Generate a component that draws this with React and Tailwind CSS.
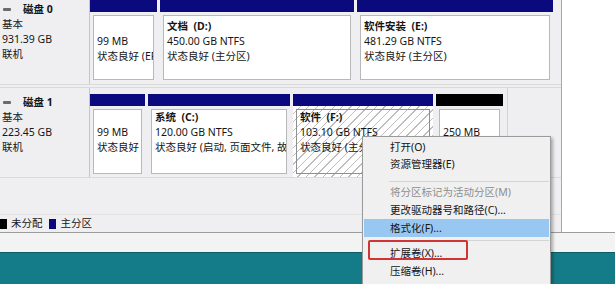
import React from "react";

const hatch =
  "bg-[image:repeating-linear-gradient(135deg,#ffffff_0px,#ffffff_5px,#bdbdbd_5px,#bdbdbd_6px)]";

function Part({ w, head = "bg-[#0a0a7e]", lines, hatched, pt = "pt-0" }) {
  return (
    <div className={`flex flex-col ${w}`}>
      <div className={`h-[12px] ${head}`} />
      <div className={`flex-1 p-[3px] ${hatched ? hatch : ""}`}>
        <div
          className={`h-[65px] overflow-hidden whitespace-pre border px-[3px] ${pt} ${
            hatched ? "border-[#8f8f8f]" : "border-[#b8b8b8] bg-white"
          }`}
        >
          {lines.map((l, i) => (
            <div key={i} className={i === 0 && l.bold ? "font-bold" : ""}>
              {l.text || "\u00a0"}
            </div>
          ))}
        </div>
      </div>
    </div>
  );
}

function DiskLabel({ name, size, pt }) {
  return (
    <div className={`w-[90px] shrink-0 border-r border-[#c6c6c6] pl-[2px] ${pt}`}>
      <div className="flex items-center">
        <span className="mr-[12px] ml-[1px] inline-block h-[3px] w-[8px] rounded-[1px] bg-[#6a6a6a]" />
        <span className="font-bold">{name}</span>
      </div>
      <div>基本</div>
      <div>{size}</div>
      <div>联机</div>
    </div>
  );
}

function MenuItem({ children, disabled, active }) {
  return (
    <div
      className={`h-[18px] pl-[26px] leading-[18px] ${disabled ? "text-[#8e8e8e]" : ""} ${
        active ? "bg-[#98c8f1]" : ""
      }`}
    >
      {children}
    </div>
  );
}

export default function App() {
  return (
    <div className="relative h-[284px] w-[615px] overflow-hidden bg-[#f0f0f0] font-['Noto_Sans','Noto_Sans_CJK_SC',sans-serif] text-[10.5px] leading-[15px] text-[#151515]">
      <div className="flex h-[232px]">
        <div className="flex w-[562px] flex-col border-r border-[#a9a9a9] bg-[#efeff1]">
          {/* disk 0 */}
          <div className="flex h-[85px] border-b border-[#dadada]">
            <DiskLabel name="磁盘 0" size="931.39 GB" pt="pt-[2px]" />
            <div className="flex gap-[3px]">
              <Part
                w="w-[67px]"
                pt="pt-[3px]"
                lines={[{}, { text: "99 MB" }, { text: "状态良好 (EFI 系统分区)" }]}
              />
              <Part
                w="w-[194px]"
                pt="pt-[3px]"
                lines={[
                  { text: "文档  (D:)", bold: true },
                  { text: "450.00 GB NTFS" },
                  { text: "状态良好 (主分区)" },
                ]}
              />
              <Part
                w="w-[196px]"
                pt="pt-[3px]"
                lines={[
                  { text: "软件安装  (E:)", bold: true },
                  { text: "481.29 GB NTFS" },
                  { text: "状态良好 (主分区)" },
                ]}
              />
            </div>
          </div>

          {/* disk 1 */}
          <div className="mt-[2px] flex h-[91px] border-t border-b border-[#dadada]">
            <DiskLabel name="磁盘 1" size="223.45 GB" pt="pt-[7px]" />
            <div className="flex gap-[3px] border-r border-[#d4d4d4] pt-[6px] pr-[4px]">
              <Part w="w-[55px]" lines={[{}, { text: "99 MB" }, { text: "状态良好" }]} />
              <Part
                w="w-[142px]"
                lines={[
                  { text: "系统  (C:)", bold: true },
                  { text: "120.00 GB NTFS" },
                  { text: "状态良好 (启动, 页面文件, 故障转储, 主分区)" },
                ]}
              />
              <Part
                w="w-[140px]"
                hatched
                lines={[
                  { text: "软件  (F:)", bold: true },
                  { text: "103.10 GB NTFS" },
                  { text: "状态良好 (主分区)" },
                ]}
              />
              <Part
                w="w-[67px]"
                head="bg-black"
                lines={[{}, { text: "250 MB" }, { text: "未分配" }]}
              />
            </div>
          </div>

          <div className="flex-1" />

          {/* legend */}
          <div className="flex h-[18px] items-center border-t border-[#e2e2e2]">
            <span className="inline-block h-[10px] w-[7px] bg-black" />
            <span className="ml-[4px]">未分配</span>
            <span className="ml-[6px] inline-block h-[10px] w-[7px] bg-[#0a0a7e]" />
            <span className="ml-[5px]">主分区</span>
          </div>
        </div>
        <div className="flex-1 bg-white" />
      </div>

      <div className="h-[20px] border-t border-[#9c9c9c] bg-[#f3f3f3]" />
      <div className="h-[32px] border-t border-[#0b5c66] bg-[#137c88]" />

      {/* context menu */}
      <div className="absolute top-[136px] left-[362px] w-[189px] border border-[#9a9a9a] bg-[#f0f0f0] px-[1px] pt-[2px] shadow-[2px_2px_3px_rgba(0,0,0,0.3)]">
        <div className="h-[17px] pl-[26px] leading-[17px]">打开(O)</div>
        <div className="h-[17px] pl-[26px] leading-[17px]">资源管理器(E)</div>
        <div className="flex h-[10px] items-end pb-[1px]">
          <div className="ml-[25px] h-px flex-1 bg-[#d4d4d4]" />
        </div>
        <MenuItem disabled>将分区标记为活动分区(M)</MenuItem>
        <MenuItem>更改驱动器号和路径(C)...</MenuItem>
        <MenuItem active>格式化(F)...</MenuItem>
        <div className="flex h-[7px] items-center">
          <div className="ml-[25px] h-px flex-1 bg-[#d4d4d4]" />
        </div>
        <MenuItem>扩展卷(X)...</MenuItem>
        <MenuItem>压缩卷(H)...</MenuItem>
        <MenuItem disabled>添加镜像(A)...</MenuItem>
      </div>

      <div className="absolute top-[240px] left-[368px] h-[20px] w-[100px] rounded-[2px] border-2 border-[#d03434]" />
    </div>
  );
}
